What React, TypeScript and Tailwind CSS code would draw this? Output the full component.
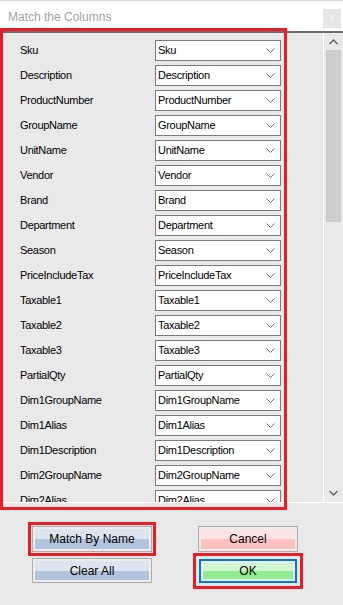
import React from "react";

const rows = [
  "Sku",
  "Description",
  "ProductNumber",
  "GroupName",
  "UnitName",
  "Vendor",
  "Brand",
  "Department",
  "Season",
  "PriceIncludeTax",
  "Taxable1",
  "Taxable2",
  "Taxable3",
  "PartialQty",
  "Dim1GroupName",
  "Dim1Alias",
  "Dim1Description",
  "Dim2GroupName",
  "Dim2Alias",
  "Dim2Description",
];

function Chevron({ up = false }: { up?: boolean }) {
  return (
    <svg width="9" height="6" viewBox="0 0 9 6" className="block">
      <path
        d={up ? "M0.5 5 L4.5 1 L8.5 5" : "M0.5 1 L4.5 5 L8.5 1"}
        fill="none"
        stroke="#606060"
        strokeWidth="1.4"
      />
    </svg>
  );
}

function Combo({ value }: { value: string }) {
  return (
    <div className="w-[126px] h-[21px] border border-[#7a7a7a] bg-white flex items-center justify-between pl-[2px] pr-[5px] shrink-0">
      <span className="text-[11px] tracking-[-0.3px] text-black leading-none whitespace-nowrap">{value}</span>
      <svg width="9" height="5" viewBox="0 0 9 5" className="block">
        <path d="M0.5 0.5 L4.5 4.5 L8.5 0.5" fill="none" stroke="#707070" strokeWidth="1" />
      </svg>
    </div>
  );
}

function Btn({
  label,
  w,
  h,
  top,
  bottom,
  extra = "",
  border = "border border-[#adadad]",
}: {
  label: string;
  w: string;
  h: string;
  top: string;
  bottom: string;
  extra?: string;
  border?: string;
}) {
  return (
    <div className={`${w} ${h} ${border} ${extra} p-[2px] bg-[#ececec] flex`}>
      <div
        className="flex-1 flex items-center justify-center text-[12px] text-black leading-none"
        style={{ background: `linear-gradient(to bottom, ${top} 0%, ${top} 50%, ${bottom} 50%, ${bottom} 100%)` }}
      >
        {label}
      </div>
    </div>
  );
}

export default function App() {
  return (
    <div
      className="w-[343px] h-[605px] bg-[#e9e9e9] flex flex-col overflow-hidden relative"
      style={{ fontFamily: '"Liberation Sans", Arial, sans-serif' }}
    >
      {/* title bar */}
      <div className="h-[31px] bg-white border-t border-[#d6d6d6] flex items-center justify-between pl-[8px] pr-[2px] shrink-0">
        <span className="text-[12px] text-[#a3a3a3] leading-none mt-[1px]">Match the Columns</span>
        <div className="w-[18px] h-[19px] bg-[#e6e6e6] flex items-center justify-center mt-[4px]">
          <span className="text-[10px] text-[#f7f7f7] leading-none">x</span>
        </div>
      </div>

      {/* panel */}
      <div className="h-[472px] shrink-0 border-t-2 border-[#6e6e6e] border-b border-b-white flex">
        <div className="flex-1 overflow-hidden flex flex-col gap-[4px] pt-[7px] pl-[20px]">
          {rows.map((r) => (
            <div key={r} className="flex items-center h-[21px] shrink-0">
              <span className="w-[135px] text-[11px] tracking-[-0.3px] text-black leading-none whitespace-nowrap">{r}</span>
              <Combo value={r} />
            </div>
          ))}
        </div>
        <div className="w-[20px] border-l border-white flex flex-col items-center">
          <div className="h-[17px] w-full flex items-center justify-center">
            <Chevron up />
          </div>
          <div className="w-[15px] h-[172px] bg-[#cdcdcd]" />
          <div className="flex-1" />
          <div className="h-[17px] w-full flex items-center justify-center mb-[1px]">
            <Chevron />
          </div>
        </div>
      </div>

      {/* buttons */}
      <div className="flex pt-[23px]">
        <div className="flex flex-col gap-[6px] pl-[32px]">
          <Btn
            label="Match By Name"
            w="w-[120px]"
            h="h-[26px]"
            top="#dde6f0"
            bottom="#b0c4de"
            extra="outline-[3px] outline-solid outline-[#ed1c24] outline-offset-[1px]"
          />
          <Btn label="Clear All" w="w-[120px]" h="h-[25px]" top="#dde6f0" bottom="#b0c4de" />
        </div>
        <div className="flex flex-col gap-[7px] pl-[46px]">
          <Btn label="Cancel" w="w-[100px]" h="h-[26px]" top="#ffe4e6" bottom="#ffc0c0" />
          <div className="pl-[1px]">
            <Btn
              label="OK"
              w="w-[98px]"
              h="h-[24px]"
              top="#d2f5d2"
              bottom="#90ee90"
              border="border-2 border-[#0078d7]"
              extra="outline-[3px] outline-solid outline-[#ed1c24] outline-offset-[3px]"
            />
          </div>
        </div>
      </div>

      {/* red annotation box around list */}
      <div className="absolute left-0 top-[28px] w-[287px] h-[482px] border-[3px] border-[#ed1c24] pointer-events-none" />
    </div>
  );
}
